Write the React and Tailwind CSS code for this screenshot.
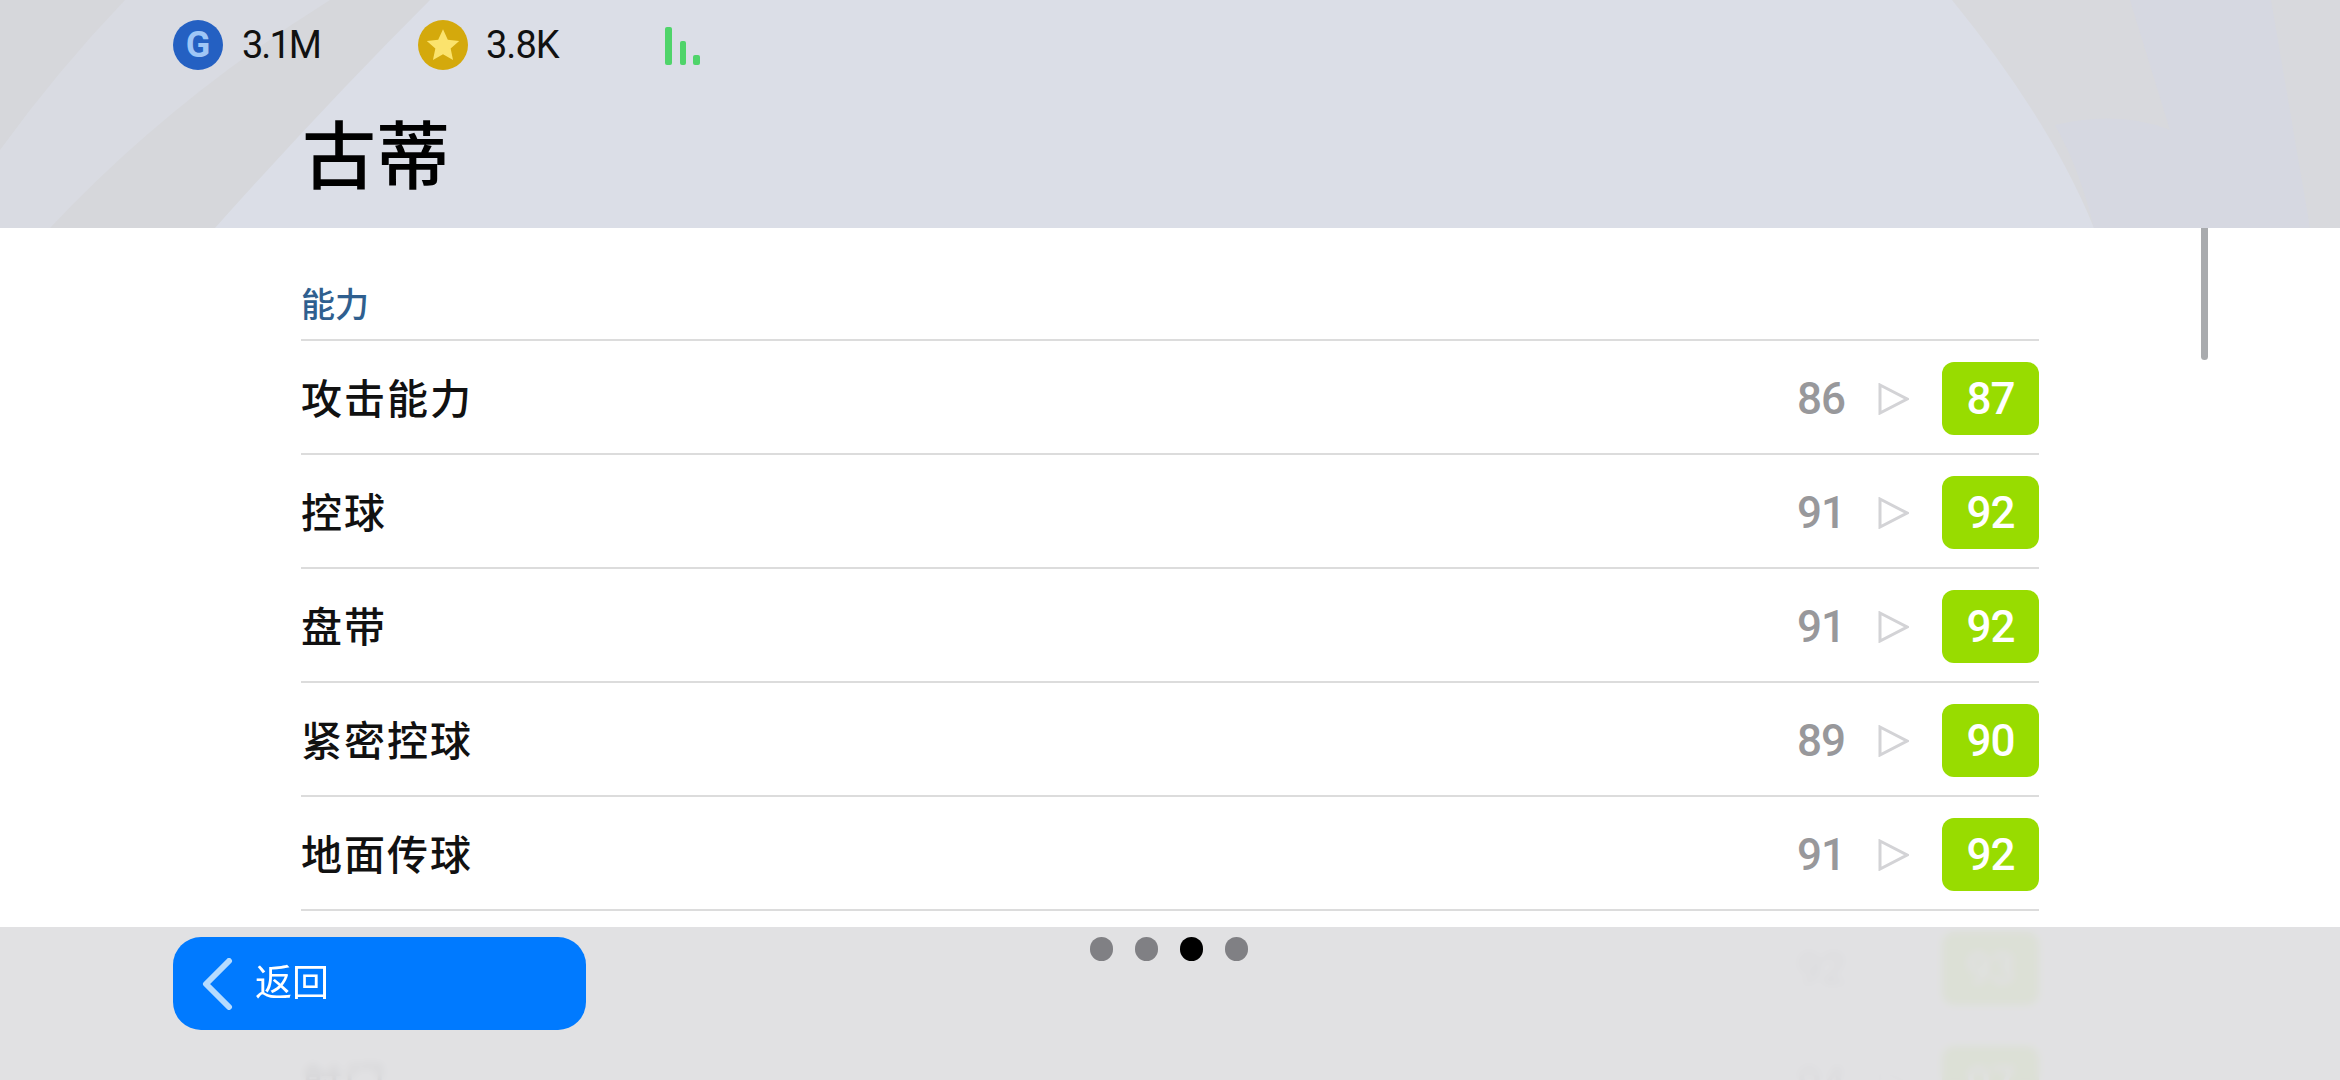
import React from 'react';

const cjk = "font-['Noto_Sans_CJK_SC','Noto_Sans',sans-serif]";

const stats = [
    { label: '攻击能力', from: 86, to: 87 },
    { label: '控球', from: 91, to: 92 },
    { label: '盘带', from: 91, to: 92 },
    { label: '紧密控球', from: 89, to: 90 },
    { label: '地面传球', from: 91, to: 92 },
    { label: '高球传球', from: 92, to: 93 },
    { label: '射门', from: 94, to: 97 },
];

const HeaderArt = () => (
    <svg className="absolute inset-0 w-full h-full" viewBox="0 0 2340 228" preserveAspectRatio="none">
        {/* left swooshes */}
        <path d="M430 0 Q325 105 215 228 L0 228 L0 0 Z" fill="#d6d7db" />
        <path d="M125 0 Q58 70 0 150 L0 228 L50 228 Q170 100 330 0 Z" fill="#d9dbe2" />
        {/* right swooshes */}
        <path d="M1952 0 Q2050 120 2094 228 L2340 228 L2340 0 Z" fill="#d8d9dd" />
        <path d="M2130 0 L2271 0 L2310 228 L2094 228 Q2080 170 2055 125 Q2120 110 2170 130 Z" fill="#d6d8e1" />
    </svg>
);

const Arrow = () => (
    <svg width="31" height="32" viewBox="0 0 31 32" className="shrink-0">
        <polygon points="2,2 29,16 2,30" fill="none" stroke="#d3d3d6" strokeWidth="3" />
    </svg>
);

const Row = ({ label, from, to }) => (
    <div className="h-[114px] pt-[3px] border-b-2 border-[#dcdcdc] flex items-center">
        <span className={`${cjk} text-[41px] tracking-[2px] font-medium text-[#111] flex-1 mb-[4px]`}>{label}</span>
        <span className="font-['Roboto',sans-serif] font-medium text-[44px] tracking-[-1px] leading-none text-[#98989b] w-[81px]">{from}</span>
        <Arrow />
        <div className="ml-[33px] w-[97px] h-[73px] rounded-[12px] bg-[#98dc00] flex items-center justify-center font-['Roboto',sans-serif] font-medium text-[44px] tracking-[-1px] text-white">
            {to}
        </div>
    </div>
);

const App = () => {
    return (
        <div className="relative w-[2340px] h-[1080px] overflow-hidden bg-white flex flex-col">
            {/* Header */}
            <div className="relative h-[228px] shrink-0 bg-[#dbdee7] pt-[20px] pl-[173px]">
                <HeaderArt />
                <div className="relative flex items-center h-[50px] font-['Roboto',sans-serif] text-[38px] tracking-[-2px] text-[#111]">
                    <div className="w-[50px] h-[50px] rounded-full bg-[#2460c2] flex items-center justify-center font-bold text-[36px] tracking-normal text-[#9fc6f6]">G</div>
                    <span className="ml-[19px] w-[176px]">3.1M</span>
                    <div className="w-[50px] h-[50px] rounded-full bg-[#d4a90c] flex items-center justify-center">
                        <svg width="36" height="36" viewBox="0 0 24 24">
                            <polygon points="12,1.5 15.2,8.5 22.8,9.3 17.1,14.4 18.7,22 12,18.1 5.3,22 6.9,14.4 1.2,9.3 8.8,8.5" fill="#fbe36d" />
                        </svg>
                    </div>
                    <span className="ml-[18px] w-[179px] tracking-[-1px]">3.8K</span>
                    <svg width="36" height="40" viewBox="0 0 36 40" className="mt-[4px]">
                        <rect x="0" y="0" width="7" height="38" rx="2" fill="#4fd46a" />
                        <rect x="15" y="14" width="6" height="24" rx="2" fill="#4fd46a" />
                        <rect x="28" y="28" width="7" height="10" rx="2" fill="#4fd46a" />
                    </svg>
                </div>
                <h1 className={`relative ${cjk} ml-[129px] mt-[37px] text-[74px] leading-[88px] font-medium text-black`}>古蒂</h1>
            </div>

            {/* Stat list */}
            <div className="flex-1 overflow-hidden pl-[301px] pr-[301px]">
                <div className={`${cjk} h-[113px] pt-[52px] border-b-2 border-[#dcdcdc] text-[34px] font-medium leading-[46px] text-[#2f5f8f]`}>能力</div>
                {stats.map((s) => (
                    <Row key={s.label} {...s} />
                ))}
            </div>

            {/* Scrollbar */}
            <div className="absolute left-[2201px] top-[228px] w-[7px] h-[132px] rounded-b-full bg-[#a9abae]"></div>

            {/* Bottom bar */}
            <div className="absolute left-0 right-0 bottom-0 h-[153px] bg-[#dfdfe2]/[0.95] backdrop-blur-[4px] pt-[10px] pl-[173px] flex items-start">
                <div className="w-[413px] h-[93px] rounded-[28px] bg-[#007aff] flex items-center pl-[28px]">
                    <svg width="32" height="52" viewBox="0 0 32 52" fill="none">
                        <path d="M28 3 L5 26 L28 49" stroke="#b5dbff" strokeWidth="6" strokeLinecap="round" strokeLinejoin="round" />
                    </svg>
                    <span className={`${cjk} ml-[22px] mb-[6px] text-[37px] text-white`}>返回</span>
                </div>
                <div className="ml-[504px] flex gap-[22px]">
                    <div className="w-[23px] h-[24px] rounded-full bg-[#808084]"></div>
                    <div className="w-[23px] h-[24px] rounded-full bg-[#808084]"></div>
                    <div className="w-[23px] h-[24px] rounded-full bg-black"></div>
                    <div className="w-[23px] h-[24px] rounded-full bg-[#808084]"></div>
                </div>
            </div>
        </div>
    );
};

export default App;
